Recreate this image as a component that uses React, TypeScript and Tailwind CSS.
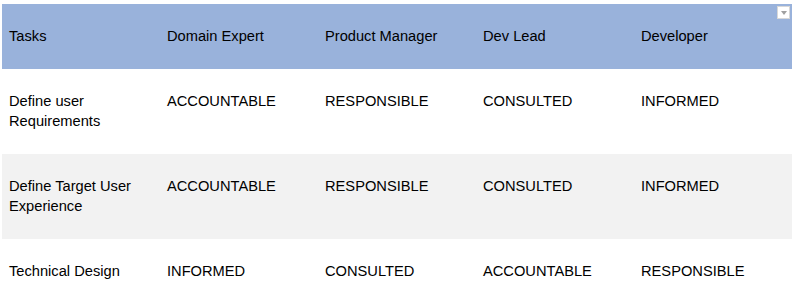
import React from "react";

const header = ["Tasks", "Domain Expert", "Product Manager", "Dev Lead", "Developer"];
const rows = [
  ["Define user Requirements", "ACCOUNTABLE", "RESPONSIBLE", "CONSULTED", "INFORMED"],
  ["Define Target User Experience", "ACCOUNTABLE", "RESPONSIBLE", "CONSULTED", "INFORMED"],
  ["Technical Design", "INFORMED", "CONSULTED", "ACCOUNTABLE", "RESPONSIBLE"],
];

export default function App() {
  return (
    <div className="w-[801px] h-[303px] overflow-hidden bg-white pt-[4px] pl-[2px] text-[14.67px] leading-[20px] text-black" style={{ fontFamily: '"Liberation Sans", Arial, sans-serif' }}>
      <div className="w-[790px]">
        <div className="relative grid grid-cols-5 bg-[#99b2db] h-[65px]">
          {header.map((h) => (
            <div key={h} className="pl-[7px] pr-[6px] pt-[22px]">{h}</div>
          ))}
          <div className="absolute right-[2px] top-[2px] w-[13px] h-[13px] bg-white border border-[#d8d8d8] flex items-center justify-center">
            <div className="w-0 h-0 border-l-[3.5px] border-r-[3.5px] border-t-[4px] border-l-transparent border-r-transparent border-t-[#a0a0a0]" />
          </div>
        </div>
        {rows.map((r, i) => (
          <div key={i} className={`grid grid-cols-5 h-[85px] ${i === 1 ? "bg-[#f2f2f2]" : "bg-white"}`}>
            {r.map((c, j) => (
              <div key={j} className="pl-[7px] pr-[6px] pt-[22px]">{c}</div>
            ))}
          </div>
        ))}
      </div>
    </div>
  );
}
